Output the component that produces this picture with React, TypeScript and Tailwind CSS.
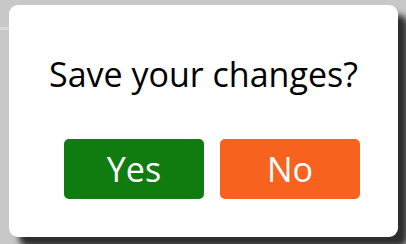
import React from "react";

export default function App() {
  return (
    <div className="w-[406px] h-[244px] bg-[#c8c8c8] relative overflow-hidden" style={{ fontFamily: '"Open Sans", "Noto Sans", sans-serif' }}>
      <div className="absolute left-0 top-[27px] w-[20px] h-[3px] bg-[#d9d9d9]" />
      <div className="absolute left-[9px] top-[5px] w-[389px] h-[232px] bg-white rounded-[9px] shadow-[10px_10px_6px_#2e2e2e] flex flex-col">
        <div className="pt-[49px] text-center text-[34px] leading-[40px] text-black">Save your changes?</div>
        <div className="mt-[45px] pl-[55px] flex gap-[16px]">
          <button className="w-[140px] h-[60px] rounded-[5px] bg-[#107c10] text-white text-[34px] leading-[40px] flex items-center justify-center">Yes</button>
          <button className="w-[140px] h-[60px] rounded-[5px] bg-[#f7631e] text-white text-[34px] leading-[40px] flex items-center justify-center">No</button>
        </div>
      </div>
    </div>
  );
}
